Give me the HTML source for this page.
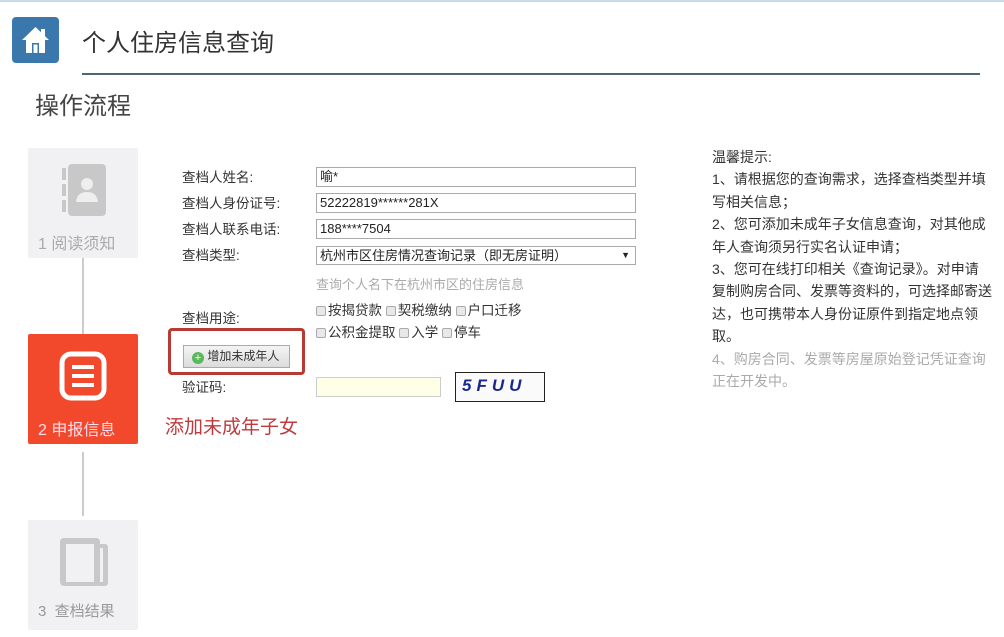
<!DOCTYPE html>
<html><head><meta charset="utf-8"><style>
*{margin:0;padding:0;box-sizing:border-box}
body{width:1004px;height:637px;background:#fff;position:relative;overflow:hidden;font-family:"Liberation Sans","Noto Sans CJK SC",sans-serif;color:#333}
.a{position:absolute;white-space:nowrap}
.lbl{font-size:13.5px;color:#333;line-height:16px}
.inp{position:absolute;left:316px;width:320px;height:20px;border:1px solid #aaa;font-size:13px;line-height:18px;padding-left:3px;color:#222;background:#fff}
.step{position:absolute;left:28px;width:110px;height:110px;background:#f1f1f3;border-radius:2px}
.tips{position:absolute;left:712px;top:146px;width:284px;font-size:14px;line-height:22.4px;color:#333;word-break:break-all}
.cb{display:inline-block;width:10px;height:10px;border:1px solid #aaa;background:#e8e8e8;border-radius:2px;margin-right:2px;vertical-align:-1px}
</style></head><body>
<div class="a" style="left:0;top:0;width:1004px;height:2px;background:#c9dbe8"></div>
<div class="a" style="left:12px;top:17px;width:47px;height:46px;background:#3a77ad;border-radius:4px">
<svg width="47" height="46" viewBox="0 0 47 46"><path d="M23.5 10 L37 23 L33 23 L33 36 L14 36 L14 23 L10 23 Z" fill="#fff"/><rect x="29" y="12" width="4" height="7" fill="#fff"/><rect x="20" y="26" width="7" height="10" fill="#3a77ad"/><rect x="21.5" y="27.5" width="4" height="8.5" fill="#fff"/></svg></div>
<div class="a" style="left:82px;top:28px;font-size:24px;color:#333;line-height:32px">个人住房信息查询</div>
<div class="a" style="left:82px;top:73px;width:898px;height:2px;background:#4f6478"></div>
<div class="a" style="left:35px;top:91px;font-size:24px;color:#444;line-height:32px">操作流程</div>

<div class="step" style="top:148px">
<svg class="a" style="left:32px;top:14px" width="48" height="58" viewBox="0 0 48 58"><rect x="8" y="2" width="38" height="52" rx="4" fill="#c8c8c8"/><rect x="2" y="6" width="4" height="12" fill="#c8c8c8"/><rect x="2" y="22" width="4" height="12" fill="#c8c8c8"/><rect x="2" y="38" width="4" height="12" fill="#c8c8c8"/><circle cx="27" cy="22" r="6" fill="#eee"/><path d="M16 40 Q17 30 27 30 Q37 30 38 40 Z" fill="#eee"/></svg>
<div class="a" style="left:10px;top:82px;font-size:16px;color:#aaa">1 阅读须知</div></div>
<div class="a" style="left:82px;top:258px;width:2px;height:76px;background:#ccc"></div>
<div class="step" style="top:334px;background:#f2492d">
<svg class="a" style="left:31px;top:17px" width="48" height="50" viewBox="0 0 48 50"><rect x="3" y="3" width="42" height="44" rx="9" fill="none" stroke="#fff" stroke-width="5"/><rect x="13" y="14" width="22" height="4" fill="#fff"/><rect x="13" y="23" width="22" height="4" fill="#fff"/><rect x="13" y="32" width="22" height="4" fill="#fff"/></svg>
<div class="a" style="left:10px;top:82px;font-size:16px;color:#fde">2 申报信息</div></div>
<div class="a" style="left:82px;top:452px;width:2px;height:64px;background:#ccc"></div>
<div class="step" style="top:520px">
<svg class="a" style="left:30px;top:16px" width="52" height="52" viewBox="0 0 52 52"><rect x="2" y="2" width="40" height="48" rx="4" fill="#c8c8c8"/><rect x="8" y="8" width="28" height="38" fill="#f1f1f3"/><rect x="38" y="8" width="12" height="42" rx="3" fill="#c8c8c8"/><rect x="42" y="12" width="3" height="34" fill="#f1f1f3"/></svg>
<div class="a" style="left:10px;top:80px;font-size:15px;color:#999">3 &nbsp;查档结果</div></div>

<div class="a lbl" style="left:182px;top:170px">查档人姓名:</div>
<div class="a lbl" style="left:182px;top:196px">查档人身份证号:</div>
<div class="a lbl" style="left:182px;top:222px">查档人联系电话:</div>
<div class="a lbl" style="left:182px;top:248px">查档类型:</div>
<div class="inp" style="top:167px">喻*</div>
<div class="inp" style="top:193px">52222819******281X</div>
<div class="inp" style="top:219px">188****7504</div>
<div class="inp" style="top:246px;height:19px;line-height:17px">杭州市区住房情况查询记录（即无房证明）<span style="position:absolute;right:5px;font-size:9px">▼</span></div>
<div class="a" style="left:316px;top:274px;font-size:13px;color:#aaa">查询个人名下在杭州市区的住房信息</div>
<div class="a" style="left:316px;top:299px;font-size:13.5px"><span class="cb"></span>按揭贷款 <span class="cb"></span>契税缴纳 <span class="cb"></span>户口迁移</div>
<div class="a" style="left:316px;top:321px;font-size:13.5px"><span class="cb"></span>公积金提取 <span class="cb"></span>入学 <span class="cb"></span>停车</div>
<div class="a lbl" style="left:182px;top:311px">查档用途:</div>
<div class="a" style="left:168px;top:328px;width:137px;height:47px;border:3px solid #b83a34;border-radius:4px"></div>
<div class="a" style="left:183px;top:345px;width:107px;height:23px;border:1px solid #aaa;background:linear-gradient(#f4f4f4,#dcdcdc);font-size:12px;line-height:21px;padding-left:8px"><span style="display:inline-block;width:12px;height:12px;border-radius:50%;background:#5cb85c;color:#fff;font-size:11px;line-height:12px;text-align:center;vertical-align:-1px">+</span> 增加未成年人</div>
<div class="a lbl" style="left:182px;top:380px">验证码:</div>
<div class="a" style="left:316px;top:377px;width:125px;height:20px;border:1px solid #ccc;background:#ffffe8"></div>
<div class="a" style="left:455px;top:372px;width:90px;height:30px;border:1px solid #222;background:#fafafa;font-size:17px;font-weight:bold;font-style:italic;color:#1a2a8a;letter-spacing:5px;padding-left:6px;line-height:26px">5FUU</div>
<div class="a" style="left:165px;top:412px;font-size:19px;color:#c0393b">添加未成年子女</div>

<div class="tips">温馨提示:<br>1、请根据您的查询需求，选择查档类型并填<br>写相关信息；<br>2、您可添加未成年子女信息查询，对其他成<br>年人查询须另行实名认证申请；<br>3、您可在线打印相关《查询记录》。对申请<br>复制购房合同、发票等资料的，可选择邮寄送<br>达，也可携带本人身份证原件到指定地点领<br>取。<br><span style="color:#aaa">4、购房合同、发票等房屋原始登记凭证查询<br>正在开发中。</span></div>
</body></html>
